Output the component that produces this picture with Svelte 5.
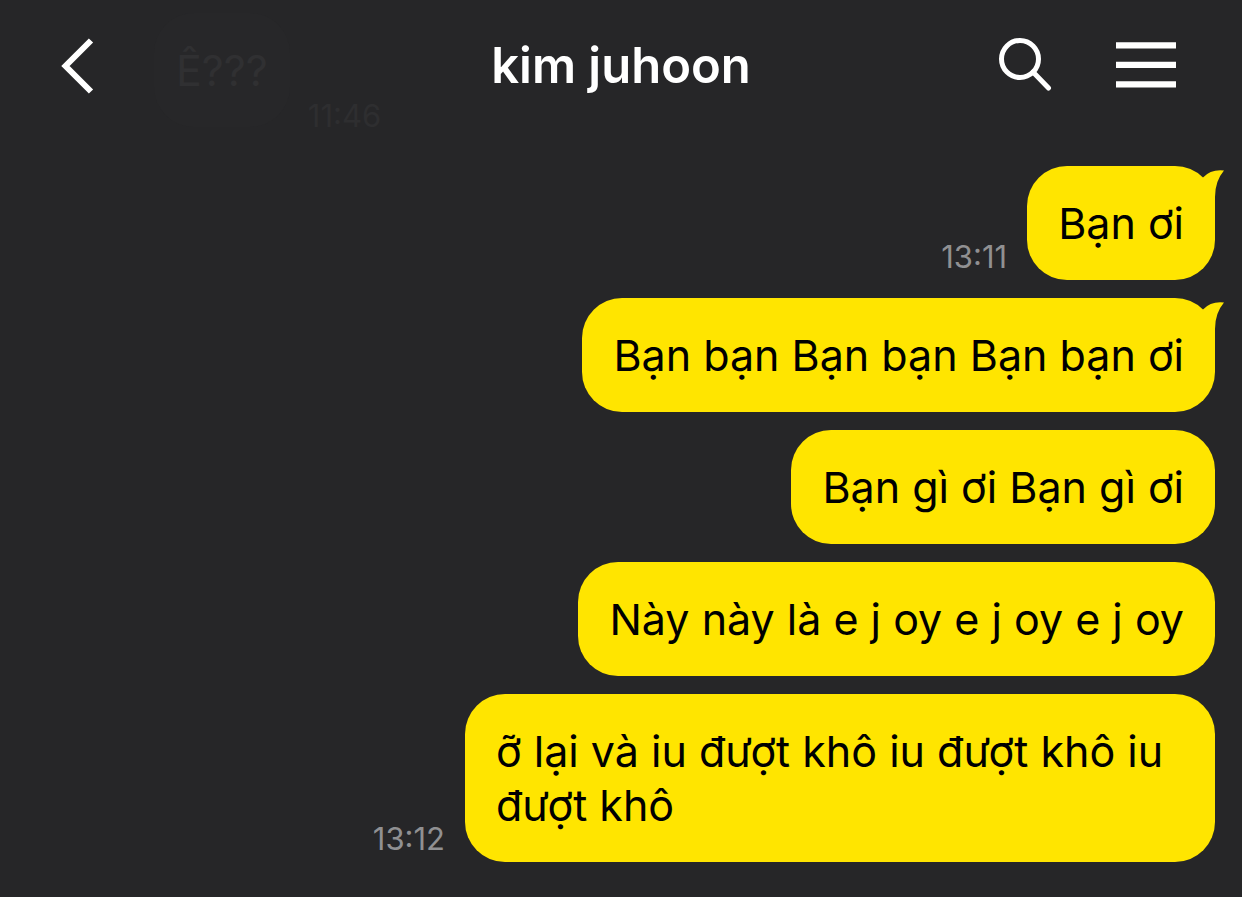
<script>
  const messages = [
    { text: 'Bạn ơi', time: '13:11', tail: true },
    { text: 'Bạn bạn Bạn bạn Bạn bạn ơi', tail: true },
    { text: 'Bạn gì ơi Bạn gì ơi' },
    { text: 'Này này là e j oy e j oy e j oy' },
    { text: 'ỡ lại và iu đượt khô iu đượt khô iu đượt khô', time: '13:12' }
  ];
</script>

<div class="chat">
  <header>
    <button class="back" aria-label="Back">
      <svg width="36" height="60" viewBox="0 0 36 60"><path d="M33 4.5 7.5 30 33 55.5" fill="none" stroke="#fff" stroke-width="6" /></svg>
    </button>
    <div class="earlier">
      <span class="ghost">Ê???</span>
      <time>11:46</time>
    </div>
    <h1>kim juhoon</h1>
    <nav>
      <button aria-label="Search">
        <svg width="56" height="56" viewBox="0 0 56 56" fill="none" stroke="#fff" stroke-width="5" stroke-linecap="round"><circle cx="24" cy="21" r="18.5" /><path d="M37 34 52.5 50" /></svg>
      </button>
      <button aria-label="Menu">
        <svg width="60" height="48" viewBox="0 0 60 48" fill="#fff"><path d="M0 .3h60v6.2H0zM0 19.8h60v6.2H0zM0 39.3h60v6.2H0z" /></svg>
      </button>
    </nav>
  </header>
  <main>
    {#each messages as m}
      <div class="row">
        {#if m.time}<time>{m.time}</time>{/if}
        <p class="bubble">
          {m.text}
          {#if m.tail}
            <svg class="tail" width="28" height="44" viewBox="0 0 28 44"><path d="M7 11.5Q15 3 28 4.5Q19 15 19 31V44H7Z" fill="#ffe500" /></svg>
          {/if}
        </p>
      </div>
    {/each}
  </main>
</div>

<style>
  :global(body) { margin: 0; background: #262628; }
  .chat { min-height: 100vh; background: #262628; font-family: Inter, sans-serif; box-sizing: border-box; overflow: hidden; }
  header { position: relative; display: flex; align-items: center; height: 132px; padding: 0 66px 0 58px; }
  button { display: flex; padding: 0; border: 0; background: none; cursor: pointer; }
  svg { display: block; }
  h1 { position: absolute; inset: 0; margin: 0; text-align: center; font-size: 49px; font-weight: 600; line-height: 132px; color: #fff; pointer-events: none; }
  nav { display: flex; align-items: center; gap: 64px; margin-left: auto; }
  .earlier { display: flex; align-items: flex-end; gap: 18px; margin: 8px 0 0 60px; color: #303032; }
  .ghost { padding: 30px 22px; border-radius: 40px; background: #272729; font-size: 43px; line-height: 54px; }
  time { font-size: 31px; line-height: 32px; color: #909092; }
  .earlier time { line-height: 22px; color: #2e2e30; }
  main { display: flex; flex-direction: column; gap: 18px; padding: 34px 27px 35px; }
  .row { display: flex; justify-content: flex-end; align-items: flex-end; gap: 20px; }
  .row time { margin-bottom: 7px; }
  .bubble { position: relative; box-sizing: border-box; max-width: 750px; margin: 0; padding: 30px 31px; border-radius: 40px; background: #ffe500; color: #000; font-size: 43px; line-height: 54px; }
  .tail { position: absolute; top: 0; right: -9px; }
</style>
